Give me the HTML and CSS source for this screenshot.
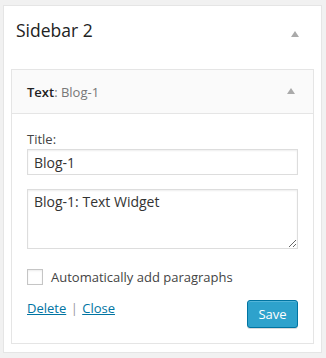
FILE: index.html
```html
<!DOCTYPE html>
<html>
<head>
<meta charset="utf-8">
<link rel="stylesheet" href="styles.css">
</head>
<body>
<div class="sidebar">
  <div class="sidebar-head">
    <h3 class="sidebar-name">Sidebar 2</h3>
    <span class="arrow arrow-top"></span>
  </div>
  <div class="widget">
    <div class="widget-top">
      <h4 class="widget-title">Text<span class="in-title">: Blog-1</span></h4>
      <span class="arrow arrow-widget"></span>
    </div>
    <div class="widget-inside">
      <label class="field-label" for="t">Title:</label>
      <input id="t" class="field" type="text" value="Blog-1">
      <textarea class="area">Blog-1: Text Widget</textarea>
      <div class="check-row">
        <span class="checkbox"></span>
        <span class="check-label">Automatically add paragraphs</span>
      </div>
      <div class="actions">
        <div class="links"><a href="#">Delete</a> <span class="sep">|</span> <a href="#">Close</a></div>
        <button class="save">Save</button>
      </div>
    </div>
  </div>
</div>
</body>
</html>
```

FILE: styles.css
```css
* { box-sizing: border-box; }
html, body { margin: 0; padding: 0; }
body {
  background: #f1f1f1;
  font-family: "Open Sans", "Liberation Sans", sans-serif;
  color: #444;
  padding: 5px 4px 5px 3px;
  height: 358px;
}
.sidebar {
  background: #fff;
  border: 1px solid #e5e5e5;
  padding: 0 7px 9px 7px;
  height: 348px;
}
.sidebar-head {
  height: 63px;
  display: flex;
  justify-content: space-between;
  align-items: flex-start;
  padding: 12px 15px 0 5px;
}
.sidebar-name {
  margin: 0;
  font-size: 17.5px;
  line-height: 24px;
  font-weight: 400;
  color: #222;
}
.arrow {
  width: 0;
  height: 0;
  border-left: 4px solid transparent;
  border-right: 4px solid transparent;
  border-bottom: 6px solid #aaa;
}
.arrow-top { margin-top: 13px; }
.widget {
  border: 1px solid #e5e5e5;
  height: 275px;
}
.widget-top {
  background: #fafafa;
  height: 44px;
  border-bottom: 1px solid #e5e5e5;
  display: flex;
  justify-content: space-between;
  align-items: flex-start;
  padding: 12px 18px 0 15px;
}
.widget-title {
  margin: 0;
  font-size: 13px;
  line-height: 20px;
  font-weight: 600;
  color: #222;
}
.in-title {
  font-weight: 400;
  color: #777;
}
.arrow-widget { margin-top: 6px; }
.widget-inside {
  padding: 15px 15px 14px;
}
.field-label {
  display: block;
  font-size: 13px;
  line-height: 20px;
  color: #444;
}
.field, .area {
  display: block;
  width: 100%;
  margin: 0;
  border: 1px solid #ddd;
  border-radius: 0;
  box-shadow: inset 0 1px 2px rgba(0,0,0,.07);
  background: #fff;
  font-family: "Open Sans", "Liberation Sans", sans-serif;
  font-size: 14px;
  color: #333;
  outline: none;
}
.field {
  height: 26px;
  padding: 0 6px;
  line-height: 24px;
}
.area {
  height: 60px;
  margin-top: 14px;
  padding: 2px 6px;
  line-height: 20px;
  resize: vertical;
}
.check-row {
  display: flex;
  align-items: center;
  margin-top: 20px;
  height: 16px;
}
.checkbox {
  width: 16px;
  height: 16px;
  border: 1px solid #c5c5c5;
  box-shadow: inset 0 1px 2px rgba(0,0,0,.08);
  background: #fff;
}
.check-label {
  margin-left: 8px;
  font-size: 13px;
  line-height: 20px;
  color: #444;
}
.actions {
  display: flex;
  justify-content: space-between;
  align-items: flex-start;
}
.links {
  margin-top: 13px;
  font-size: 13px;
  line-height: 20px;
}
.links a {
  color: #0074a2;
  text-decoration: underline;
}
.sep { color: #999; padding: 0 1px; }
.save {
  margin-top: 15px;
  height: 28px;
  width: 51px;
  padding: 0 10px 1px;
  background: #2ea2cc;
  border: 1px solid #0074a2;
  border-radius: 3px;
  box-shadow: inset 0 1px 0 rgba(120,200,230,.5), 0 1px 0 rgba(0,0,0,.15);
  color: #fff;
  font-family: "Open Sans", "Liberation Sans", sans-serif;
  font-size: 13px;
  line-height: 26px;
}
```
